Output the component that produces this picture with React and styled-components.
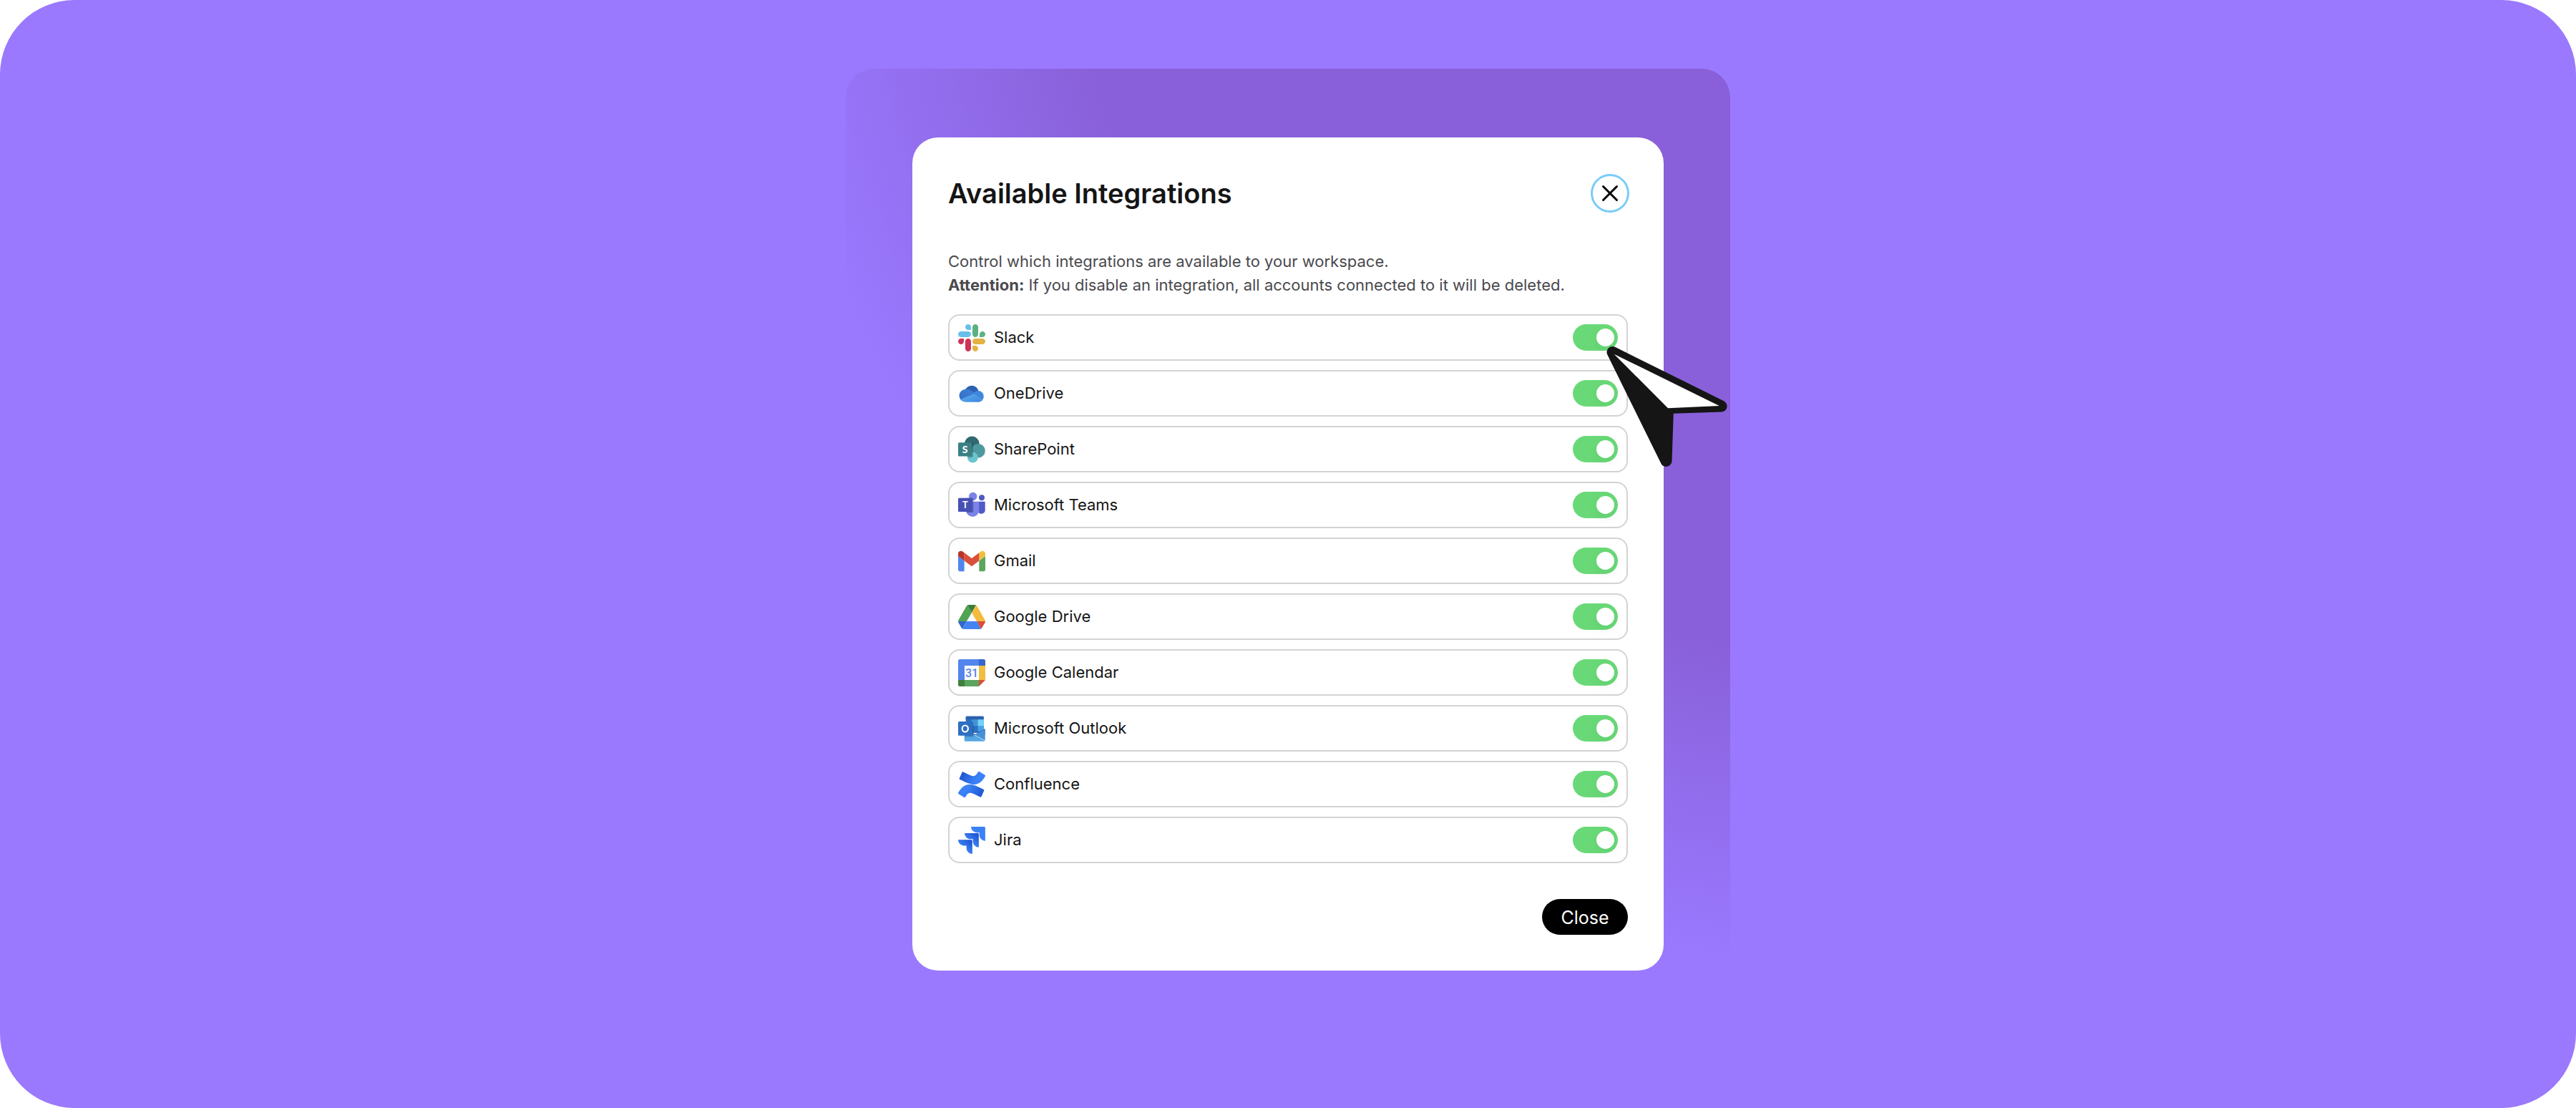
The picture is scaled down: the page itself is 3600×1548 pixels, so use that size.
import React, { useId, useState } from "react";
import styled, { createGlobalStyle } from "styled-components";

const GlobalStyle = createGlobalStyle`
  *, *::before, *::after { box-sizing: border-box; }
  body {
    margin: 0;
    background: #ffffff;
    font-family: Inter, "Liberation Sans", sans-serif;
    color: #151515;
  }
  button, input { font: inherit; }
`;

const Stage = styled.main`
  min-height: 100vh;
  display: flex;
  align-items: center;
  justify-content: center;
  padding: 96px 24px;
  border-radius: 104px;
  background: #9a79ff;
`;

const Backdrop = styled.div`
  padding: 96px 93px;
  border-radius: 40px;
  background: radial-gradient(
    circle at 1420px -295px,
    #8960d9 1110px,
    #9a79ff 1550px
  );
`;

const Dialog = styled.section`
  position: relative;
  width: 1050px;
  max-width: 100%;
  padding: 50px;
  border-radius: 36px;
  background: #ffffff;
`;

const Header = styled.header`
  display: flex;
  align-items: center;
  justify-content: space-between;
  min-height: 56px;
  margin-bottom: 51px;
`;

const Title = styled.h1`
  margin: 0;
  font-size: 38px;
  line-height: 48px;
  font-weight: 600;
`;

const IconButton = styled.button`
  display: grid;
  place-items: center;
  width: 50px;
  height: 50px;
  padding: 0;
  border: 1px solid #77cbfa;
  border-radius: 50%;
  background: #ffffff;
  color: #000000;
  box-shadow: 0 0 0 2px #77cbfa;
`;

const Description = styled.p`
  margin: 0 0 24px;
  font-size: 22px;
  line-height: 33px;
  color: #4a4a4e;

  strong { font-weight: 700; }
`;

const List = styled.ul`
  display: flex;
  flex-direction: column;
  gap: 13px;
  margin: 0;
  padding: 0;
  list-style: none;
`;

const Row = styled.li`
  display: flex;
  align-items: center;
  gap: 12px;
  height: 65px;
  padding: 0 12px;
  border: 2px solid #d3d3d5;
  border-radius: 16px;
`;

const Logo = styled.svg`
  flex: none;
  width: 38px;
  height: 38px;
`;

const Name = styled.label`
  flex: 1;
  font-size: 22px;
  line-height: 33px;
`;

const Switch = styled.input`
  appearance: none;
  display: flex;
  align-items: center;
  justify-content: ${(p) => (p.checked ? "flex-end" : "flex-start")};
  width: 63px;
  height: 37px;
  margin: 0;
  padding: 0 5px;
  border-radius: 19px;
  background: ${(p) => (p.checked ? "#69d977" : "#d4d4d8")};

  &::before {
    content: "";
    width: 25px;
    height: 25px;
    border-radius: 50%;
    background: #ffffff;
    box-shadow: 0 5px 18px rgba(0, 0, 0, 0.06);
  }
`;

const Footer = styled.footer`
  display: flex;
  justify-content: flex-end;
  margin-top: 50px;
`;

const CloseButton = styled.button`
  height: 50px;
  width: 120px;
  padding: 2px 0 0;
  border: 0;
  border-radius: 25px;
  background: #000000;
  color: #ffffff;
  font-size: 25px;
  line-height: 33px;
`;

const Pointer = styled.svg`
  position: absolute;
  top: 288px;
  right: -95px;
  width: 180px;
  height: 176px;
  pointer-events: none;
`;

const Glyph = styled.text`
  font-family: ${(p) => p.$family || "Lato"}, "Liberation Sans", sans-serif;
  font-weight: ${(p) => p.$weight || 700};
  font-size: ${(p) => p.$size}px;
  text-anchor: middle;
`;

function SlackLogo() {
  return (
    <Logo viewBox="0 0 122.8 122.8" aria-hidden="true">
      <path fill="#cd3357" d="M25.8 77.6c0 7.1-5.8 12.9-12.9 12.9S0 84.7 0 77.6s5.8-12.9 12.9-12.9h12.9v12.9zm6.5 0c0-7.1 5.8-12.9 12.9-12.9s12.9 5.8 12.9 12.9v32.3c0 7.1-5.8 12.9-12.9 12.9s-12.9-5.8-12.9-12.9V77.6z" />
      <path fill="#67c0ec" d="M45.2 25.8c-7.1 0-12.9-5.8-12.9-12.9S38.1 0 45.2 0s12.9 5.8 12.9 12.9v12.9H45.2zm0 6.5c7.1 0 12.9 5.8 12.9 12.9s-5.8 12.9-12.9 12.9H12.9C5.8 58.1 0 52.3 0 45.2s5.8-12.9 12.9-12.9h32.3z" />
      <path fill="#5bb182" d="M97 45.2c0-7.1 5.8-12.9 12.9-12.9s12.9 5.8 12.9 12.9-5.8 12.9-12.9 12.9H97V45.2zm-6.5 0c0 7.1-5.8 12.9-12.9 12.9s-12.9-5.8-12.9-12.9V12.9C64.7 5.8 70.5 0 77.6 0s12.9 5.8 12.9 12.9v32.3z" />
      <path fill="#e2b244" d="M77.6 97c7.1 0 12.9 5.8 12.9 12.9s-5.8 12.9-12.9 12.9-12.9-5.8-12.9-12.9V97h12.9zm0-6.5c-7.1 0-12.9-5.8-12.9-12.9s5.8-12.9 12.9-12.9h32.3c7.1 0 12.9 5.8 12.9 12.9s-5.8 12.9-12.9 12.9H77.6z" />
    </Logo>
  );
}

function OneDriveLogo() {
  return (
    <Logo viewBox="0 0 38 38" aria-hidden="true">
      <defs>
        <linearGradient id="od-base" x1="0" y1="0.3" x2="1" y2="1">
          <stop offset="0" stopColor="#5aa9ec" />
          <stop offset="1" stopColor="#3a87dc" />
        </linearGradient>
        <linearGradient id="od-left" x1="0" y1="1" x2="1" y2="0">
          <stop offset="0" stopColor="#3370c8" />
          <stop offset="1" stopColor="#3f80d6" />
        </linearGradient>
      </defs>
      <path fill="#2c61b4" d="M9.6 13.8C11.8 9.8 15.2 7.7 19 7.7c4.4 0 8.1 2.9 9.4 7.4l-6 5z" />
      <path fill="url(#od-left)" d="M11.5 12.7c2.6 0 4.6.8 6.6 2l6 4.2L3.6 27.4C1 23.7.9 19.7 3.1 16.8 5 14.2 8 12.7 11.5 12.7z" />
      <path fill="#3f87db" d="M28.1 15.1c4.3 0 7.6 3.3 7.6 7.6 0 2.1-.7 4-2 5.5L20.8 18.9c2-2.3 4.5-3.8 7.3-3.8z" />
      <path fill="url(#od-base)" d="M3.3 27.2l18.2-8 12.3 9c-1.4 1.6-3.3 2.5-5.6 2.5H11.6c-3.7 0-6.7-1.2-8.3-3.5z" />
    </Logo>
  );
}

function SharePointLogo() {
  return (
    <Logo viewBox="0 0 38 38" aria-hidden="true">
      <circle cx="19.3" cy="11" r="10.4" fill="#306a70" />
      <circle cx="28" cy="20.7" r="9.8" fill="#4d999f" />
      <circle cx="20.4" cy="30" r="7.4" fill="#6ac4ce" />
      <path fill="#000" opacity="0.22" d="M9.5 9.3h9.5a2 2 0 0 1 2 2v17a2 2 0 0 1-2 2h-5.9a7.4 7.4 0 0 1 0-2H9.5z" />
      <rect y="9.3" width="19.4" height="19.2" rx="1.5" fill="#3a8084" />
      <Glyph x="9.7" y="24" $size="14" $weight="900" fill="#fff">S</Glyph>
    </Logo>
  );
}

function TeamsLogo() {
  return (
    <Logo viewBox="0 0 38 38" aria-hidden="true">
      <circle cx="33" cy="8.3" r="4" fill="#5059c0" />
      <path fill="#5059c9" d="M28 13.7h8.7a1 1 0 0 1 1 1v10.5a5.2 5.2 0 0 1-9.7 3z" />
      <circle cx="20.7" cy="6.5" r="5.7" fill="#7b83e6" />
      <path fill="#7b83e6" d="M11 13.7h17.2a1.2 1.2 0 0 1 1.2 1.2v10.8a9.2 9.2 0 0 1-18.4 0z" />
      <path fill="#3c408f" opacity="0.5" d="M11 8.7h8.8a1.6 1.6 0 0 1 1.6 1.6v17.2a1.8 1.8 0 0 1-1.8 1.8h-7.7L11 26z" />
      <rect y="8.7" width="20" height="19.2" rx="1.5" fill="#4750b4" />
      <Glyph x="10" y="22.8" $size="13" fill="#fff">T</Glyph>
    </Logo>
  );
}

function GmailLogo() {
  return (
    <Logo viewBox="52 31 88 88" aria-hidden="true">
      <path fill="#5086ee" d="M58 108h14V74L52 59v43c0 3.32 2.69 6 6 6" />
      <path fill="#59a65c" d="M120 108h14c3.32 0 6-2.69 6-6V59l-20 15" />
      <path fill="#f2be42" d="M120 48v26l20-15v-8c0-7.42-8.47-11.65-14.4-7.2" />
      <path fill="#d9513c" d="M72 74V48l24 18 24-18v26L96 92" />
      <path fill="#b73427" d="M52 51v8l20 15V48l-5.6-4.2c-5.94-4.45-14.4-.22-14.4 7.2" />
    </Logo>
  );
}

function DriveLogo() {
  return (
    <Logo viewBox="0 -4.65 87.3 87.3" aria-hidden="true">
      <path fill="#2f66cf" d="m6.6 66.85 3.85 6.65c.8 1.4 1.95 2.5 3.3 3.3l13.75-23.8h-27.5c0 1.55.4 3.1 1.2 4.5z" />
      <path fill="#50a353" d="m43.65 25-13.75-23.8c-1.35.8-2.5 1.9-3.3 3.3l-25.4 44a9.06 9.06 0 0 0 -1.2 4.5h27.5z" />
      <path fill="#d64f3c" d="m73.55 76.8c1.35-.8 2.5-1.9 3.3-3.3l1.6-2.75 7.65-13.25c.8-1.4 1.2-2.95 1.2-4.5h-27.502l5.852 11.5z" />
      <path fill="#3a7d3b" d="m43.65 25 13.75-23.8c-1.35-.8-2.9-1.2-4.5-1.2h-18.5c-1.6 0-3.15.45-4.5 1.2z" />
      <path fill="#4683f2" d="m59.8 53h-32.3l-13.75 23.8c1.35.8 2.9 1.2 4.5 1.2h50.8c1.6 0 3.15-.45 4.5-1.2z" />
      <path fill="#f4bb3f" d="m73.4 26.5-12.7-22c-.8-1.4-1.95-2.5-3.3-3.3l-13.75 23.8 16.15 28h27.45c0-1.55-.4-3.1-1.2-4.5z" />
    </Logo>
  );
}

function CalendarLogo() {
  return (
    <Logo viewBox="0 0 38 38" aria-hidden="true">
      <path fill="#5385ec" d="M2.5 0H29v9H9v20H0V2.5A2.5 2.5 0 0 1 2.5 0z" />
      <path fill="#3566cc" d="M29 0h6.5A2.5 2.5 0 0 1 38 2.5V9h-9z" />
      <path fill="#f0be42" d="M29 9h9v20h-9z" />
      <path fill="#5ba45e" d="M9 29h20v9H9z" />
      <path fill="#418040" d="M0 29h9v9H2.5A2.5 2.5 0 0 1 0 35.5z" />
      <path fill="#d64f3c" d="M29 29h9l-9 9z" />
      <path fill="#fff" d="M9 9h20v20H9z" />
      <Glyph x="19" y="24.6" $size="16" $weight="500" $family="Roboto" fill="#5385ec">31</Glyph>
    </Logo>
  );
}

function OutlookLogo() {
  return (
    <Logo viewBox="0 0 38 38" aria-hidden="true">
      <path fill="#2f70bf" d="M10.7 3a1.3 1.3 0 0 1 1.3-1.3h22.4A1.3 1.3 0 0 1 35.7 3v22h-25z" />
      <path fill="#2b62b0" d="M10.7 3a1.3 1.3 0 0 1 1.3-1.3h22.4A1.3 1.3 0 0 1 35.7 3v3.2h-25z" />
      <path fill="#4393d6" d="M19 6.2h8.5V15H19z" />
      <path fill="#74d3f7" d="M27.5 6.2h8.2V15h-8.2z" />
      <path fill="#2e72bd" d="M19 15h8.5v8.5H19z" />
      <path fill="#4aa0e0" d="M27.5 15h8.2v7.5h-8.2z" />
      <path fill="#2a62a8" d="M37.7 19 24 27l-8-4v5h21.7z" />
      <path fill="#4592d6" d="M37.7 20V35.5L23 27.6z" />
      <path fill="#56a5e3" d="M8.7 20 37.4 36a1.6 1.6 0 0 1-1.2.7H10.3a1.6 1.6 0 0 1-1.6-1.6z" />
      <path fill="#123f77" opacity="0.4" d="M10 9h9.5a1.8 1.8 0 0 1 1.8 1.8V28.5a1.8 1.8 0 0 1-1.8 1.8H10z" />
      <rect y="9" width="19.8" height="19.7" rx="1.5" fill="#2d6fc2" />
      <ellipse cx="9.8" cy="19" rx="4.1" ry="4.5" fill="none" stroke="#fff" strokeWidth="2.2" />
    </Logo>
  );
}

const CONFLUENCE_WAVE =
  "M9.26 187.33C6.62 191.64 3.65 196.63 1.13 200.62c-2.25 3.81-1.04 8.72 2.73 11.05l52.82 32.51c1.85 1.14 4.09 1.5 6.21.98 2.11-.52 3.93-1.87 5.04-3.75 2.12-3.53 4.84-8.12 7.81-13.04 20.92-34.54 41.97-30.31 79.92-12.19l52.38 24.91c1.97.94 4.23 1.03 6.27.27 2.04-.76 3.68-2.32 4.55-4.31l25.15-56.89c1.78-4.06-.02-8.8-4.06-10.63-11.05-5.2-33.03-15.56-52.82-25.11C115.95 109.84 55.45 112.07 9.26 187.33z";

function ConfluenceLogo() {
  return (
    <Logo viewBox="0 -5 256 256" aria-hidden="true">
      <defs>
        <linearGradient id="cf-wave" gradientUnits="userSpaceOnUse" x1="243" y1="262" x2="84" y2="170">
          <stop offset="0.18" stopColor="#1f55d0" />
          <stop offset="1" stopColor="#3b82f8" />
        </linearGradient>
      </defs>
      <path fill="url(#cf-wave)" d={CONFLUENCE_WAVE} />
      <path fill="url(#cf-wave)" d={CONFLUENCE_WAVE} transform="rotate(180 128 123)" />
    </Logo>
  );
}

const JIRA_ARROW =
  "M244.66 0H121.71C121.71 14.72 127.55 28.84 137.96 39.25S162.49 55.5 177.21 55.5H199.86V77.37C199.88 107.99 224.7 132.82 255.32 132.84V10.67C255.32 4.78 250.55 0 244.66 0Z";

function JiraLogo() {
  return (
    <Logo viewBox="0 0 256 256" aria-hidden="true">
      <defs>
        <linearGradient id="jr-arrow" gradientUnits="userSpaceOnUse" x1="252" y1="0" x2="172" y2="84">
          <stop offset="0.15" stopColor="#2156d0" />
          <stop offset="1" stopColor="#3b82f8" />
        </linearGradient>
      </defs>
      <path fill="#3b82f8" d={JIRA_ARROW} />
      <path fill="url(#jr-arrow)" d={JIRA_ARROW} transform="translate(-60.8 61.3)" />
      <path fill="url(#jr-arrow)" d={JIRA_ARROW} transform="translate(-121.7 122.4)" />
    </Logo>
  );
}

const INTEGRATIONS = [
  { name: "Slack", Icon: SlackLogo },
  { name: "OneDrive", Icon: OneDriveLogo },
  { name: "SharePoint", Icon: SharePointLogo },
  { name: "Microsoft Teams", Icon: TeamsLogo },
  { name: "Gmail", Icon: GmailLogo },
  { name: "Google Drive", Icon: DriveLogo },
  { name: "Google Calendar", Icon: CalendarLogo },
  { name: "Microsoft Outlook", Icon: OutlookLogo },
  { name: "Confluence", Icon: ConfluenceLogo },
  { name: "Jira", Icon: JiraLogo },
];

function IntegrationRow({ name, Icon }) {
  const id = useId();
  const [enabled, setEnabled] = useState(true);
  return (
    <Row>
      <Icon />
      <Name htmlFor={id}>{name}</Name>
      <Switch
        id={id}
        type="checkbox"
        role="switch"
        checked={enabled}
        onChange={(e) => setEnabled(e.target.checked)}
      />
    </Row>
  );
}

export default function App() {
  return (
    <>
      <GlobalStyle />
      <Stage>
        <Backdrop>
          <Dialog role="dialog" aria-labelledby="dialog-title">
            <Header>
              <Title id="dialog-title">Available Integrations</Title>
              <IconButton type="button" aria-label="Close dialog">
                <svg width="24" height="24" viewBox="0 0 24 24" fill="none" stroke="currentColor" strokeWidth="3" strokeLinecap="round" aria-hidden="true">
                  <path d="M2.5 2.5l19 19M21.5 2.5l-19 19" />
                </svg>
              </IconButton>
            </Header>
            <Description>
              Control which integrations are available to your workspace.
              <br />
              <strong>Attention:</strong> If you disable an integration, all accounts connected to it will be deleted.
            </Description>
            <List>
              {INTEGRATIONS.map((item) => (
                <IntegrationRow key={item.name} {...item} />
              ))}
            </List>
            <Footer>
              <CloseButton type="button">Close</CloseButton>
            </Footer>
            <Pointer viewBox="0 0 180 176" aria-hidden="true">
              <path d="M13.5 12 165.5 87.5 91 90 88.5 164z" fill="#151515" stroke="#151515" strokeWidth="16" strokeLinejoin="round" />
              <path d="M15.7 14.7 162.7 87 91 90.3z" fill="#ffffff" />
            </Pointer>
          </Dialog>
        </Backdrop>
      </Stage>
    </>
  );
}
